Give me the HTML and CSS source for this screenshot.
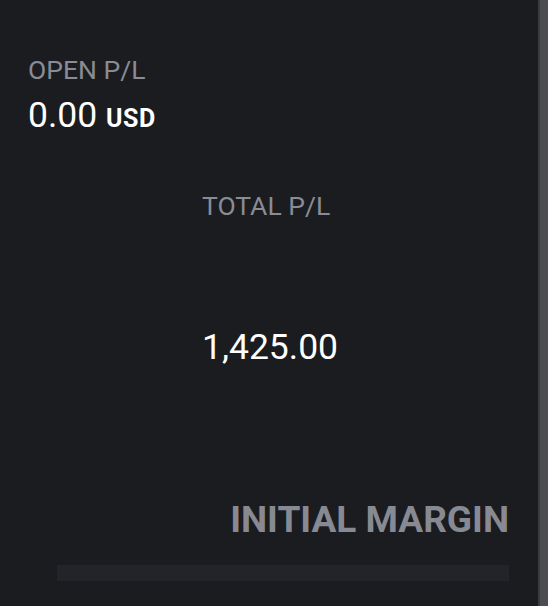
FILE: index.html
```html
<!DOCTYPE html>
<html lang="en">
<head>
  <meta charset="UTF-8">
  <meta name="viewport" content="width=device-width, initial-scale=1.0">
  <title>Account Summary</title>
  <link rel="stylesheet" href="styles.css">
</head>
<body>
  <div class="panel">
    <div class="stat">
      <div class="stat-label">OPEN P/L</div>
      <div class="stat-value">0.00 <span class="currency">USD</span></div>
    </div>

    <div class="stat stat-total">
      <div class="stat-label">TOTAL P/L</div>
      <div class="stat-value stat-value-far">1,425.00</div>
    </div>

    <h2 class="section-title">INITIAL MARGIN</h2>
    <div class="margin-bar"></div>
  </div>

  <div class="scroll-track"></div>
</body>
</html>
```

FILE: styles.css
```css
html, body {
  height: 100%;
}

body {
  margin: 0;
  display: flex;
  background-color: #1b1c20;
  font-family: Roboto, 'Liberation Sans', Arial, sans-serif;
  overflow: hidden;
}

.panel {
  flex: 1;
  padding: 55px 29px 0 28px;
}

.stat-label {
  font-size: 26.5px;
  line-height: 30px;
  color: #898c94;
}

.stat-value {
  margin-top: 10px;
  font-size: 35.5px;
  line-height: 40px;
  color: #ffffff;
}

.currency {
  font-size: 25px;
  font-weight: 700;
  letter-spacing: 0.5px;
}

.stat-total {
  margin-top: 52px;
  margin-left: 174px;
}

.stat-value-far {
  margin-top: 106px;
}

.section-title {
  margin: 131px 0 0;
  font-size: 37px;
  line-height: 44px;
  font-weight: 700;
  text-align: right;
  color: #878a92;
}

.margin-bar {
  margin: 23px 0 0 29px;
  height: 16px;
  background-color: #232429;
}

.scroll-track {
  width: 8px;
  border-left: 2px solid #3c3c40;
  background-color: #4d4d51;
}
```
